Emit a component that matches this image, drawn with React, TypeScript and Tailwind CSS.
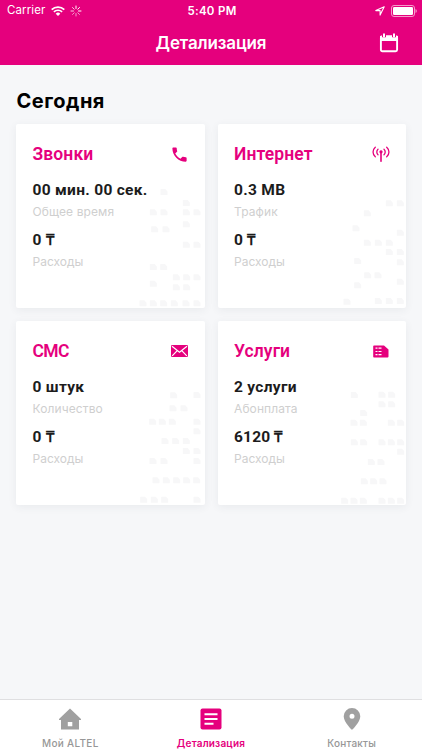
import type { ReactNode } from "react";

type Dot = [number, number];

const CALLS_DOTS: Dot[] = [
  [148, 68], [170.3, 79], [137.3, 88.3], [148, 88.3], [170.3, 88.3], [181, 88.3],
  [170.3, 100.3], [138.7, 105.3], [150, 105.3], [170.3, 120.7], [181, 120.7],
  [137.3, 143], [147.7, 143], [160.3, 153.3], [170.7, 153.3], [181, 153.3],
  [137.3, 159.7], [160.3, 163.3], [170.7, 163.3], [127, 179.3], [137.3, 179.3],
  [147.7, 179.3], [158.3, 179.3], [170, 179.3], [181, 179.3],
];

const INTERNET_DOTS: Dot[] = [
  [171.3, 79.3], [182.3, 79.3], [149.3, 89.3], [138, 104.3], [182.3, 108.7],
  [149.3, 118.7], [160.3, 118.7], [171.3, 118.7], [171.3, 128], [182.3, 128],
  [139.7, 137], [182.3, 138.3], [149.7, 151.3], [160, 151.3], [182.3, 157.7],
  [139.7, 161.3], [129, 177.7], [160.3, 177], [171.3, 177], [182.3, 177],
];

const SMS_DOTS: Dot[] = [
  [157.7, 74.3], [181, 74], [157, 87.3], [168, 87.3], [136.7, 100.7],
  [146.3, 100.7], [156.3, 100.7], [181, 100.7], [181, 110.3], [149, 120],
  [159.7, 120], [170.3, 120], [170.3, 130], [181, 130], [137, 140], [148, 140],
  [181, 140], [140, 159.3], [150.3, 159.3], [160.7, 159.3], [170.7, 159.3],
  [180.7, 159.3], [127.7, 178.7], [138.3, 178.7], [148.7, 178.7], [181, 178.7],
];

const SERVICES_DOTS: Dot[] = [
  [136.3, 74], [164, 73.7], [173.7, 73.7], [164, 83.3], [173.7, 83.3],
  [145.7, 92], [136, 101.7], [145.3, 101.7], [173.3, 101.7], [182.7, 101.7],
  [136.3, 121.3], [145.7, 121.3], [164, 121.3], [173.3, 121.3], [182.7, 121.3],
  [182.7, 130.7], [153.3, 141], [163, 141], [146.3, 160.3], [155.7, 160.3],
  [165, 160.3], [126.7, 179.7], [136, 179.7], [145.3, 179.7], [164, 179.7],
  [173.3, 179.7], [182.7, 179.7],
];

function PhoneIcon() {
  return (
    <svg width="19" height="19" viewBox="0 0 24 24" fill="currentColor">
      <path d="M6.62 10.79c1.44 2.83 3.76 5.14 6.59 6.59l2.2-2.2c.27-.27.67-.36 1.02-.24 1.12.37 2.33.57 3.57.57.55 0 1 .45 1 1V20c0 .55-.45 1-1 1-9.39 0-17-7.61-17-17 0-.55.45-1 1-1h3.5c.55 0 1 .45 1 1 0 1.25.2 2.45.57 3.57.11.35.03.74-.25 1.02l-2.2 2.2z" />
    </svg>
  );
}

function AntennaIcon() {
  return (
    <svg width="18" height="16" viewBox="0 0 18 16" fill="none" stroke="currentColor" strokeWidth="1.3" strokeLinecap="round">
      <path d="M3.3 1.2C.3 3.7.3 8.3 3.3 10.8M14.7 1.2c3 2.5 3 7.1 0 9.6" />
      <path d="M6 3.2C4.4 4.6 4.4 7.4 6 8.8M12 3.2c1.6 1.4 1.6 4.2 0 5.6" />
      <circle cx="9" cy="5.8" r="1" fill="currentColor" />
      <path d="M9 6v9.2" strokeWidth="1.6" />
    </svg>
  );
}

function MailIcon() {
  return (
    <svg width="17" height="12" viewBox="0 0 17 12">
      <rect width="17" height="12" rx="1.3" fill="currentColor" />
      <path d="M1 1.3 8.5 7.3l7.5-6M1.2 10.9l4.8-5M15.8 10.9l-4.8-5" fill="none" stroke="#fff" strokeWidth="1.2" />
    </svg>
  );
}

function SimIcon() {
  return (
    <svg width="16" height="13" viewBox="0 0 16 13">
      <path d="M1 .5h10L15.5 4.5v7a1 1 0 0 1-1 1H1a.8.8 0 0 1-.8-.8V1.3A.8.8 0 0 1 1 .5z" fill="currentColor" />
      <path d="M2.5 3.2h2M5.5 3.2h3M2.5 6.5h2M5.5 6.5h3M2.5 9.7h2M5.5 9.7h3" stroke="#fff" strokeWidth="1.2" />
    </svg>
  );
}

function Dots({ dots }: { dots: Dot[] }) {
  return (
    <svg className="absolute inset-0 h-full w-full text-[#f7f7f8]" fill="currentColor">
      {dots.map(([x, y]) => (
        <path key={`${x}-${y}`} transform={`translate(${x - 3.5} ${y - 3})`} d="M.5 0h4.3L7 2.4V5.5a.5.5 0 0 1-.5.5h-6A.5.5 0 0 1 0 5.5v-5A.5.5 0 0 1 .5 0z" />
      ))}
    </svg>
  );
}

interface CardProps {
  title: string;
  titleClass: string;
  icon: ReactNode;
  value: string;
  label: string;
  labelClass: string;
  cost: string;
  dots: Dot[];
}

function Card({ title, titleClass, icon, value, label, labelClass, cost, dots }: CardProps) {
  return (
    <div className="relative h-[184px] rounded-[2px] bg-white pt-5 pr-4 pl-[16.5px] shadow-[0_2px_8px_rgba(60,70,90,0.07)]">
      <Dots dots={dots} />
      <div className="relative flex h-5 items-center justify-between text-[#e5007d]">
        <h2 className={`font-['Roboto',sans-serif] text-[17.5px] leading-5 font-semibold ${titleClass}`}>{title}</h2>
        <div className="flex w-[19px] justify-center">{icon}</div>
      </div>
      <div className="relative mt-4 font-['Roboto',sans-serif] text-[15.5px] leading-5 font-bold tracking-[0.3px] whitespace-nowrap text-[#1c1c1c]">{value}</div>
      <div className={`relative mt-1 text-[12px] leading-4 text-[#cfcfcf] ${labelClass}`}>{label}</div>
      <div className="relative mt-[10px] font-['Roboto',sans-serif] text-[15.5px] leading-5 font-bold tracking-[0.2px] text-[#1c1c1c]">{cost}</div>
      <div className="relative mt-1 text-[12px] leading-4 text-[#cfcfcf]">Расходы</div>
    </div>
  );
}

function StatusBar() {
  return (
    <div className="grid h-[22px] grid-cols-3 items-center pr-[5px] pl-[7px] text-[11.5px] leading-none">
      <div className="flex items-center">
        <span className="tracking-[0.1px]">Carrier</span>
        <svg className="ml-[6px]" width="14" height="10" viewBox="0 0 14 10" fill="none" stroke="#fff" strokeWidth="1.7">
          <path d="M.7 3.6a9 9 0 0 1 12.6 0M2.9 5.9a5.9 5.9 0 0 1 8.2 0" />
          <path d="M4.7 7.7a3.3 3.3 0 0 1 4.6 0L7 10z" fill="#fff" stroke="none" />
        </svg>
        <svg className="ml-[5px]" width="12" height="12" viewBox="0 0 12 12" stroke="#fff" strokeWidth="1" strokeLinecap="round">
          <path d="M6 1v2.5M9.5 2.5 7.8 4.2M11 6H8.5" />
          <path d="m9.5 9.5-1.7-1.7M6 11V8.5M2.5 9.5l1.7-1.7" opacity="0.6" />
          <path d="M1 6h2.5M2.5 2.5l1.7 1.7" opacity="0.8" />
        </svg>
      </div>
      <div className="pt-px text-center font-semibold tracking-[0.3px]">5:40 PM</div>
      <div className="flex items-center justify-end gap-[6px]">
        <svg width="10" height="10" viewBox="0 0 10 10" fill="none" stroke="#fff" strokeWidth="1.1" strokeLinejoin="round">
          <path d="M9.2.8.8 4.6h4.3v4.5z" />
        </svg>
        <svg className="-mt-px" width="26" height="12" viewBox="0 0 26 12">
          <rect x=".5" y=".5" width="23" height="11" rx="2.5" fill="none" stroke="#f59aca" />
          <rect x="2" y="2" width="20" height="8" rx="1.3" fill="#fff" />
          <path d="M24.5 4v4q1.3-.6 1.3-2t-1.3-2z" fill="#f59aca" />
        </svg>
      </div>
    </div>
  );
}

function Header() {
  return (
    <header className="h-[65px] bg-[#e5007d] text-white">
      <StatusBar />
      <div className="grid h-[42px] grid-cols-[1fr_auto_1fr] items-center pr-[23px] pl-[23px]">
        <span />
        <h1 className="text-[17px] leading-6 font-semibold tracking-[-0.15px]">Детализация</h1>
        <svg className="justify-self-end" width="20" height="20" viewBox="0 0 20 20">
          <rect x="1.9" y="3.3" width="16.2" height="15" rx="1.5" fill="none" stroke="#fff" strokeWidth="1.9" />
          <path d="M1 3h18v5H1z" fill="#fff" />
          <path d="M5 .5v3.8M15 .5v3.8" stroke="#e5007d" strokeWidth="4" />
          <path d="M5 .5v3.5M15 .5v3.5" stroke="#fff" strokeWidth="2" />
        </svg>
      </div>
    </header>
  );
}

function TabBar() {
  return (
    <nav className="grid h-[51px] grid-cols-3 border-t border-[#dfdfe1] bg-white text-center text-[10px] leading-3 font-medium text-[#979797]">
      <div className="flex flex-col items-center pt-2">
        <svg width="22" height="22" viewBox="0 0 22 22" fill="#a0a0a0">
          <path fillRule="evenodd" d="M11 .5 22 11v1h-2v9.5H2V12H0v-1zM8.8 14v4.2h4.5V14z" />
        </svg>
        <span className="mt-[7px] tracking-[0.3px]">Мой ALTEL</span>
      </div>
      <div className="flex flex-col items-center pt-2 font-semibold text-[#e5007d]">
        <svg width="22" height="22" viewBox="0 0 22 22">
          <rect x=".5" y=".5" width="21" height="21" rx="2" fill="currentColor" />
          <path d="M4.5 6.3h13M4.5 11h13M4.5 15.8h9" stroke="#fff" strokeWidth="2" />
        </svg>
        <span className="mt-[7px] tracking-[0.2px]">Детализация</span>
      </div>
      <div className="flex flex-col items-center pt-2">
        <svg width="22" height="22" viewBox="0 0 22 22" fill="#a0a0a0">
          <path fillRule="evenodd" d="M11 0a8.3 8.3 0 0 0-8.3 8.3C2.7 14.3 11 22 11 22s8.3-7.7 8.3-13.7A8.3 8.3 0 0 0 11 0zm0 5.7a2.5 2.5 0 1 1 0 5 2.5 2.5 0 0 1 0-5z" />
        </svg>
        <span className="mt-[7px] tracking-[0.2px]">Контакты</span>
      </div>
    </nav>
  );
}

function App() {
  return (
    <div className="flex h-[750px] w-[422px] flex-col overflow-hidden bg-[#f6f7f9] font-['Inter',sans-serif]">
      <Header />
      <main className="flex-1 px-4 pt-[22px]">
        <h2 className="pl-[0.5px] text-[20px] leading-7 font-bold tracking-[0.5px] text-black">Сегодня</h2>
        <div className="mt-[9px] grid grid-cols-2 gap-[13px]">
          <Card
            title="Звонки" titleClass="tracking-[0.1px]" icon={<PhoneIcon />}
            value="00 мин. 00 сек." label="Общее время" labelClass="tracking-[0.1px]"
            cost="0 ₸" dots={CALLS_DOTS}
          />
          <Card
            title="Интернет" titleClass="tracking-[0.1px]" icon={<AntennaIcon />}
            value="0.3 MB" label="Трафик" labelClass="tracking-[0.1px]"
            cost="0 ₸" dots={INTERNET_DOTS}
          />
          <Card
            title="СМС" titleClass="tracking-[-0.6px]" icon={<MailIcon />}
            value="0 штук" label="Количество" labelClass="tracking-[0.1px]"
            cost="0 ₸" dots={SMS_DOTS}
          />
          <Card
            title="Услуги" titleClass="tracking-[0.1px]" icon={<SimIcon />}
            value="2 услуги" label="Абонплата" labelClass="tracking-[0.1px]"
            cost="6120 ₸" dots={SERVICES_DOTS}
          />
        </div>
      </main>
      <TabBar />
    </div>
  );
}

export default App;
